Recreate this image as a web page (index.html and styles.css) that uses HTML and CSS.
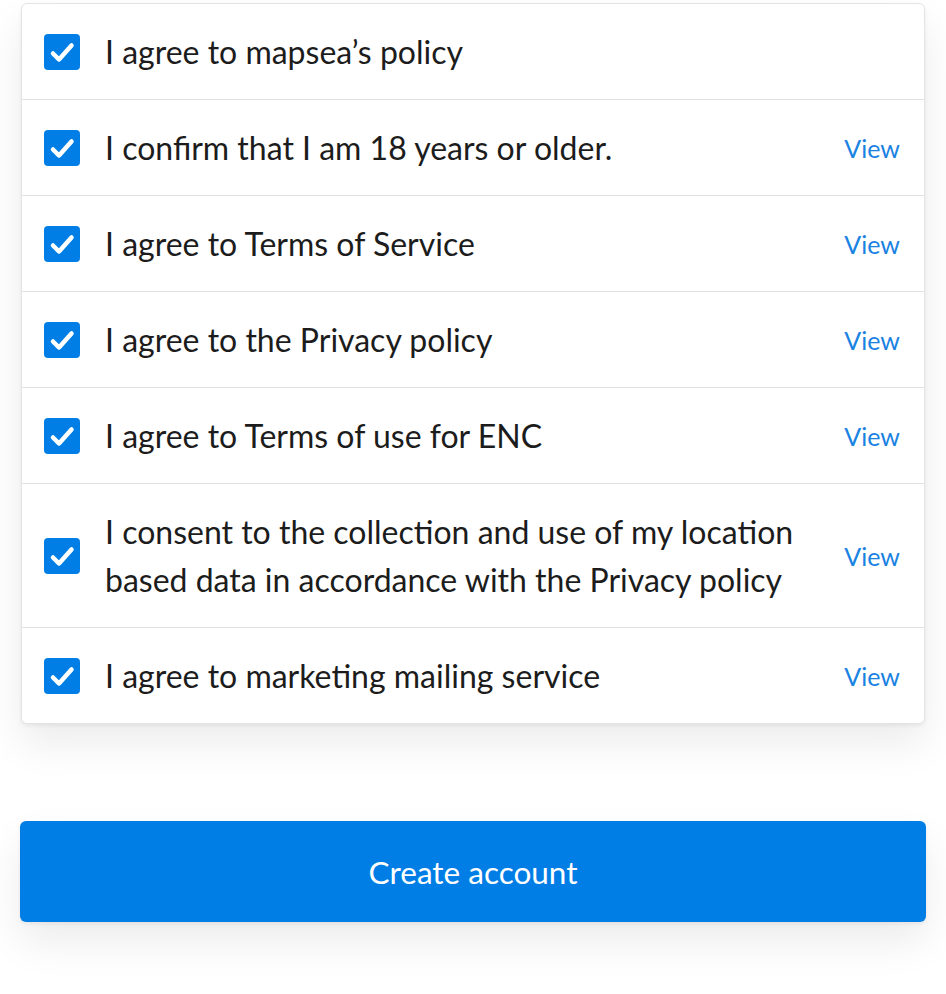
FILE: index.html
```html
<!DOCTYPE html>
<html lang="en">
<head>
    <meta charset="UTF-8">
    <meta name="viewport" content="width=device-width, initial-scale=1.0">
    <title>Create account</title>
    <link rel="stylesheet" href="styles.css">
</head>
<body>
    <div class="signup">
        <div class="agreements">
            <label class="agreement">
                <span class="check"><svg viewBox="0 0 36 36"><path d="M9 19.5l6 6L27.5 11.5"/></svg></span>
                <span class="agreement-text">I agree to mapsea’s policy</span>
            </label>
            <label class="agreement">
                <span class="check"><svg viewBox="0 0 36 36"><path d="M9 19.5l6 6L27.5 11.5"/></svg></span>
                <span class="agreement-text">I confirm that I am 18 years or older.</span>
                <a class="view-link" href="#">View</a>
            </label>
            <label class="agreement">
                <span class="check"><svg viewBox="0 0 36 36"><path d="M9 19.5l6 6L27.5 11.5"/></svg></span>
                <span class="agreement-text">I agree to Terms of Service</span>
                <a class="view-link" href="#">View</a>
            </label>
            <label class="agreement">
                <span class="check"><svg viewBox="0 0 36 36"><path d="M9 19.5l6 6L27.5 11.5"/></svg></span>
                <span class="agreement-text">I agree to the Privacy policy</span>
                <a class="view-link" href="#">View</a>
            </label>
            <label class="agreement">
                <span class="check"><svg viewBox="0 0 36 36"><path d="M9 19.5l6 6L27.5 11.5"/></svg></span>
                <span class="agreement-text">I agree to Terms of use for ENC</span>
                <a class="view-link" href="#">View</a>
            </label>
            <label class="agreement">
                <span class="check"><svg viewBox="0 0 36 36"><path d="M9 19.5l6 6L27.5 11.5"/></svg></span>
                <span class="agreement-text">I consent to the collection and use of my location based data in accordance with the Privacy policy</span>
                <a class="view-link" href="#">View</a>
            </label>
            <label class="agreement">
                <span class="check"><svg viewBox="0 0 36 36"><path d="M9 19.5l6 6L27.5 11.5"/></svg></span>
                <span class="agreement-text">I agree to marketing mailing service</span>
                <a class="view-link" href="#">View</a>
            </label>
        </div>

        <button class="create-btn" type="button">Create account</button>
    </div>
</body>
</html>
```

FILE: styles.css
```css
body {
    margin: 0;
    font-family: Lato, "Noto Sans", sans-serif;
    color: #1c1c1c;
    background: #fff;
}

.signup {
    padding: 3px 21px 72px 21px;
}

.agreements {
    border: 1px solid #e4e4e4;
    border-radius: 6px;
    background: #fff;
    box-shadow: 0 20px 40px rgba(0, 0, 0, 0.08), 0 2px 4px rgba(0, 0, 0, 0.06);
}

.agreement {
    display: flex;
    align-items: center;
    min-height: 95px;
    padding: 24px 24px 23px 22px;
    box-sizing: border-box;
    border-bottom: 1px solid #e2e2e2;
    cursor: pointer;
}

.agreement:last-child {
    border-bottom: none;
}

.check {
    flex: 0 0 36px;
    width: 36px;
    height: 36px;
    border-radius: 4px;
    background: #007ee5;
    margin-right: 25px;
    display: flex;
}

.check svg {
    width: 36px;
    height: 36px;
    fill: none;
    stroke: #fff;
    stroke-width: 4.5;
    stroke-linecap: round;
    stroke-linejoin: round;
}

.agreement-text {
    flex: 1;
    font-size: 32px;
    line-height: 48px;
    padding-right: 40px;
}

.view-link {
    font-size: 25px;
    color: #1a82e2;
    text-decoration: none;
}

.create-btn {
    display: block;
    width: calc(100% + 2px);
    margin: 97px -1px 0;
    height: 101px;
    border: none;
    border-radius: 6px;
    background: #007ee5;
    color: #fff;
    font-family: inherit;
    font-size: 31.5px;
    box-shadow: 0 20px 40px rgba(0, 0, 0, 0.08), 0 2px 4px rgba(0, 0, 0, 0.06);
    cursor: pointer;
}
```
